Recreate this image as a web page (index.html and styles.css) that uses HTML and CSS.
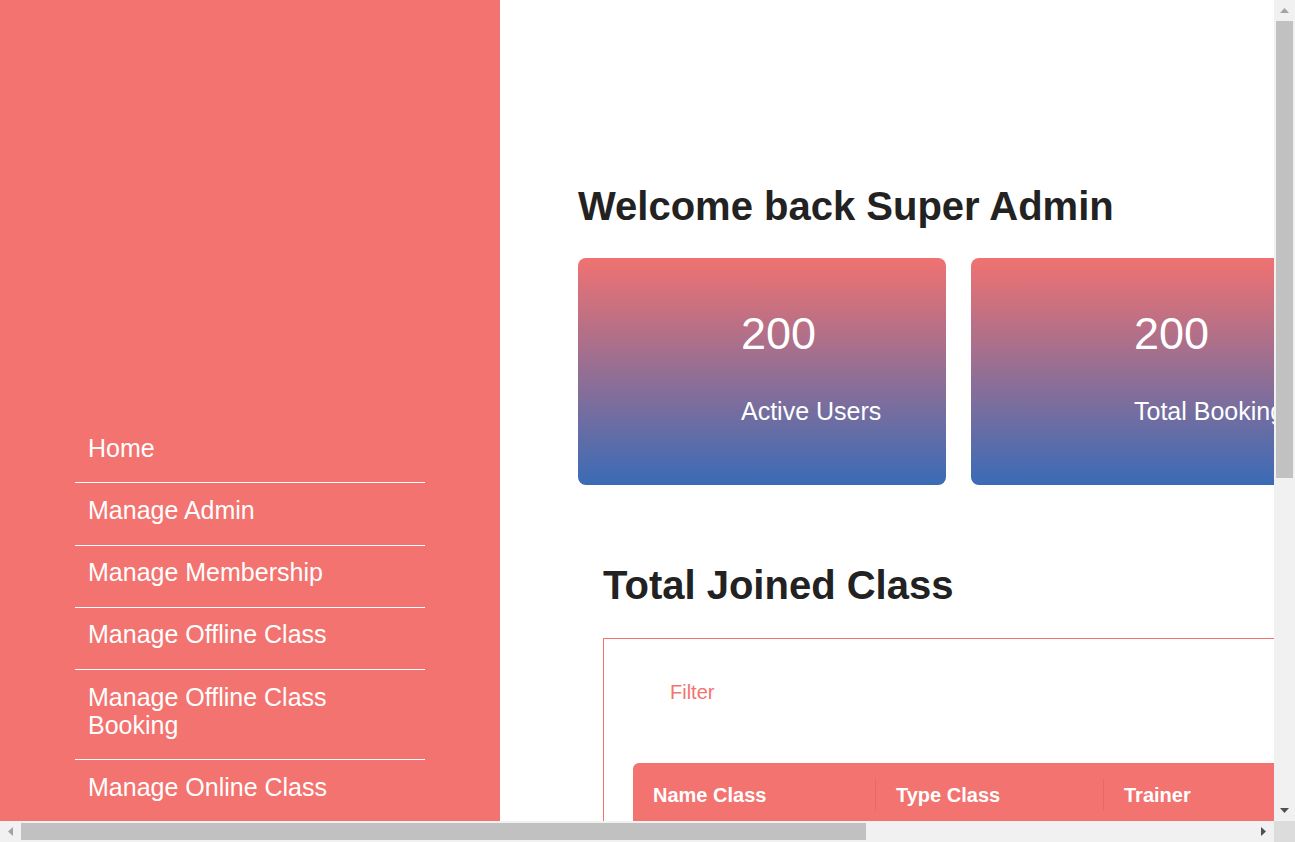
FILE: index.html
```html
<!DOCTYPE html>
<html lang="en">
<head>
<meta charset="utf-8">
<title>Dashboard</title>
<link rel="stylesheet" href="styles.css">
</head>
<body class="page">
<div class="window">
  <div class="viewport">
    <div class="layout">
      <aside class="sidebar">
        <ul class="nav">
          <li class="nav-item"><a class="nav-link">Home</a></li>
          <li class="nav-item"><a class="nav-link">Manage Admin</a></li>
          <li class="nav-item"><a class="nav-link">Manage Membership</a></li>
          <li class="nav-item"><a class="nav-link">Manage Offline Class</a></li>
          <li class="nav-item"><a class="nav-link">Manage Offline Class Booking</a></li>
          <li class="nav-item"><a class="nav-link">Manage Online Class</a></li>
        </ul>
      </aside>
      <main class="main">
        <h1 class="welcome">Welcome back Super Admin</h1>
        <div class="cards">
          <div class="card">
            <p class="card-num">200</p>
            <p class="card-label">Active Users</p>
          </div>
          <div class="card">
            <p class="card-num">200</p>
            <p class="card-label">Total Booking</p>
          </div>
        </div>
        <section class="joined">
          <h2 class="joined-title">Total Joined Class</h2>
          <div class="joined-box">
            <button class="filter" type="button">Filter</button>
            <div class="table">
              <div class="thead">
                <div class="th">Name Class</div>
                <div class="th th-sep">Type Class</div>
                <div class="th th-sep">Trainer</div>
              </div>
            </div>
          </div>
        </section>
      </main>
    </div>
  </div>
  <div class="vscroll">
    <div class="sb-btn">
      <svg width="9" height="5" viewBox="0 0 9 5"><polygon points="4.5,0 9,5 0,5" fill="#a3a3a3"/></svg>
    </div>
    <div class="vtrack"><div class="vthumb"></div></div>
    <div class="sb-btn">
      <svg width="9" height="5" viewBox="0 0 9 5"><polygon points="0,0 9,0 4.5,5" fill="#505050"/></svg>
    </div>
  </div>
  <div class="hscroll">
    <div class="sb-btn">
      <svg width="5" height="9" viewBox="0 0 5 9"><polygon points="5,0 5,9 0,4.5" fill="#a3a3a3"/></svg>
    </div>
    <div class="htrack"><div class="hthumb"></div></div>
    <div class="sb-btn">
      <svg width="5" height="9" viewBox="0 0 5 9"><polygon points="0,0 5,4.5 0,9" fill="#505050"/></svg>
    </div>
  </div>
  <div class="corner"></div>
</div>
</body>
</html>
```
FILE: styles.css
```css
.page {
  margin: 0;
  overflow: hidden;
  font-family: "Liberation Sans", Arial, sans-serif;
  background: #fff;
}

.window {
  display: grid;
  grid-template-columns: 1274px 21px;
  grid-template-rows: 821px 21px;
  width: 1295px;
  height: 842px;
}

.viewport {
  overflow: hidden;
  min-width: 0;
  min-height: 0;
}

/* scrollbars */
.vscroll {
  display: flex;
  flex-direction: column;
  background: #f1f1f1;
}

.hscroll {
  display: flex;
  background: #f1f1f1;
}

.sb-btn {
  flex: 0 0 21px;
  width: 21px;
  height: 21px;
  display: flex;
  align-items: center;
  justify-content: center;
}

.vtrack {
  flex: 1;
  padding: 0 2px;
}

.vthumb {
  height: 457px;
  background: #c1c1c1;
}

.htrack {
  flex: 1;
  padding: 2px 0;
}

.hthumb {
  width: 845px;
  height: 17px;
  background: #c1c1c1;
}

.corner {
  background: #dcdcdc;
}

/* page */
.layout {
  display: flex;
  align-items: stretch;
  width: 1858px;
  height: 1400px;
}

.sidebar {
  flex: 0 0 500px;
  width: 500px;
  background: #f37370;
}

.nav {
  list-style: none;
  margin: 0 0 0 75px;
  padding: 421px 0 0;
  width: 350px;
}

.nav-item {
  border-bottom: 1px solid #ffffff;
  padding: 12.5px 13px 20.8px;
  font-size: 25px;
  line-height: 28px;
}

.nav-link {
  color: #ffffff;
  text-decoration: none;
}

.main {
  flex: 0 0 1358px;
  box-sizing: border-box;
  padding: 183px 70px 94px 78px;
}

.welcome {
  margin: 0;
  font-size: 40px;
  line-height: 46px;
  font-weight: 700;
  color: #222222;
}

.cards {
  display: flex;
  gap: 25px;
  margin-top: 29px;
}

.card {
  flex: 0 0 368px;
  height: 227px;
  box-sizing: border-box;
  padding: 50px 0 0 163px;
  border-radius: 8px;
  background: linear-gradient(180deg, #f07271 0%, #3a6bb6 100%);
  color: #ffffff;
}

.card-num {
  margin: 0;
  font-size: 45px;
  line-height: 52px;
}

.card-label {
  margin: 37px 0 0;
  font-size: 25px;
  line-height: 29px;
  white-space: nowrap;
}

.joined {
  margin: 77px 0 0 25px;
}

.joined-title {
  margin: 0;
  font-size: 40px;
  line-height: 46px;
  font-weight: 700;
  color: #222222;
}

.joined-box {
  margin-top: 30px;
  border: 1px solid #f37370;
  padding: 42px 29px 30px;
  height: 560px;
}

.filter {
  display: block;
  margin: 0 0 0 37px;
  padding: 0;
  border: 0;
  background: none;
  font-family: inherit;
  font-size: 20px;
  line-height: 23px;
  color: #f37370;
}

.table {
  margin-top: 59px;
}

.thead {
  display: grid;
  grid-template-columns: 242px 228px 170px 1fr;
  align-items: center;
  height: 64px;
  background: #f37370;
  border-radius: 6px 6px 0 0;
  color: #ffffff;
  font-size: 20px;
  line-height: 23px;
  font-weight: 700;
}

.th {
  display: flex;
  align-items: center;
  height: 32px;
  padding-left: 20px;
}

.th-sep {
  border-left: 1px solid rgba(180, 60, 60, 0.18);
}
```
